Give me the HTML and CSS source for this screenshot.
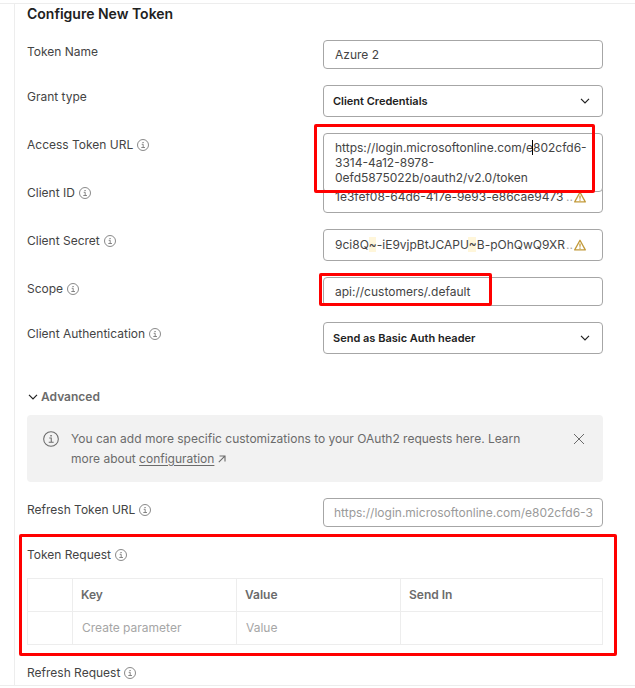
FILE: index.html
```
<!DOCTYPE html>
<html lang="en">
<head>
    <meta charset="UTF-8">
    <meta name="viewport" content="width=device-width, initial-scale=1.0">
    <title>Configure New Token</title>
    <link rel="stylesheet" href="styles.css">
</head>
<body>
    <!-- shared icons -->
    <svg class="sprite" aria-hidden="true">
        <symbol id="icon-info" viewBox="0 0 12 12">
            <circle cx="6" cy="6" r="5.5" fill="none" stroke="currentColor" stroke-width="0.8"/>
            <path d="M4.7 5.3H6.2V8.5M4.3 8.5H8" fill="none" stroke="currentColor" stroke-width="0.8"/>
            <rect x="5.5" y="3" width="1.1" height="1.1" fill="currentColor"/>
        </symbol>
        <symbol id="icon-chevron" viewBox="0 0 10 6">
            <path d="M1 0.8L5 4.8L9 0.8" fill="none" stroke="currentColor" stroke-width="1.2"/>
        </symbol>
        <symbol id="icon-warning" viewBox="0 0 12 12">
            <path d="M6 1.2L11.3 10.9H0.7Z" fill="none" stroke="currentColor" stroke-width="1.3" stroke-linejoin="round"/>
            <path d="M6 4.5V7.8M6 8.6V9.8" stroke="currentColor" stroke-width="1.3"/>
        </symbol>
    </svg>

    <main class="panel">
        <h1>Configure New Token</h1>

        <form class="form">
            <div class="row">
                <label for="tokenName">Token Name</label>
                <input class="field" id="tokenName" type="text" value="Azure 2">
            </div>
            <div class="row">
                <label for="grantType">Grant type</label>
                <div class="select-wrap">
                    <select class="field" id="grantType">
                        <option>Client Credentials</option>
                    </select>
                    <svg class="chevron"><use href="#icon-chevron"/></svg>
                </div>
            </div>
            <div class="row">
                <label for="tokenUrl">Access Token URL <svg class="info"><use href="#icon-info"/></svg></label>
                <div class="expanding">
                    <textarea class="field" id="tokenUrl" spellcheck="false">https://login.microsoftonline.com/e802cfd6-3314-4a12-8978-0efd5875022b/oauth2/v2.0/token</textarea>
                    <span class="caret"></span>
                    <span class="mark mark-url"></span>
                </div>
            </div>
            <div class="row">
                <label for="clientId">Client ID <svg class="info"><use href="#icon-info"/></svg></label>
                <div class="field secret">
                    <input id="clientId" type="text" value="1e3fef08-64d6-417e-9e93-e86cae9473">
                    <span class="dots">..</span>
                    <svg class="warning"><use href="#icon-warning"/></svg>
                </div>
            </div>
            <div class="row">
                <label for="clientSecret">Client Secret <svg class="info"><use href="#icon-info"/></svg></label>
                <div class="field secret">
                    <input class="tilde" id="clientSecret" type="text" value="9ci8Q~-iE9vjpBtJCAPU~B-pOhQwQ9XR">
                    <span class="dots">..</span>
                    <svg class="warning"><use href="#icon-warning"/></svg>
                </div>
            </div>
            <div class="row">
                <label for="scope">Scope <svg class="info"><use href="#icon-info"/></svg></label>
                <div class="marked">
                    <input class="field" id="scope" type="text" value="api://customers/.default">
                    <span class="mark mark-scope"></span>
                </div>
            </div>
            <div class="row">
                <label for="clientAuth">Client Authentication <svg class="info"><use href="#icon-info"/></svg></label>
                <div class="select-wrap">
                    <select class="field" id="clientAuth">
                        <option>Send as Basic Auth header</option>
                    </select>
                    <svg class="chevron"><use href="#icon-chevron"/></svg>
                </div>
            </div>

            <button class="advanced" type="button" aria-expanded="true">
                <svg><use href="#icon-chevron"/></svg>Advanced
            </button>

            <div class="notice">
                <svg class="notice-icon"><use href="#icon-info"/></svg>
                <p>You can add more specific customizations to your OAuth2 requests here. Learn more about <a href="#">configuration</a>
                    <svg class="arrow" viewBox="0 0 8 8"><path d="M0.8 7.2L6.8 1.2M1.5 1H7V6.5" fill="none" stroke="currentColor" stroke-width="1.1"/></svg>
                </p>
                <button class="close" type="button" aria-label="Close">
                    <svg viewBox="0 0 12 12"><path d="M1 1L11 11M11 1L1 11" stroke="currentColor"/></svg>
                </button>
            </div>

            <div class="row">
                <label for="refreshUrl">Refresh Token URL <svg class="info"><use href="#icon-info"/></svg></label>
                <input class="field" id="refreshUrl" type="text" placeholder="https://login.microsoftonline.com/e802cfd6-3">
            </div>

            <section class="request marked">
                <h2>Token Request <svg class="info"><use href="#icon-info"/></svg></h2>
                <table>
                    <thead>
                        <tr>
                            <th class="check"></th>
                            <th class="key">Key</th>
                            <th class="value">Value</th>
                            <th>Send In</th>
                        </tr>
                    </thead>
                    <tbody>
                        <tr>
                            <td></td>
                            <td><input type="text" placeholder="Create parameter" aria-label="Key"></td>
                            <td><input type="text" placeholder="Value" aria-label="Value"></td>
                            <td></td>
                        </tr>
                    </tbody>
                </table>
                <span class="mark mark-request"></span>
            </section>

            <h2>Refresh Request <svg class="info"><use href="#icon-info"/></svg></h2>
        </form>
    </main>
</body>
</html>
```
FILE: styles.css
```
* {
    box-sizing: border-box;
}
body {
    margin: 0;
    padding-top: 3px;
    background: #fff;
    color: #444;
    font-family: Inter, "Liberation Sans", sans-serif;
    font-size: 12px;
    line-height: 24px;
    border-bottom: 1px solid #ededed;
}
body::before {
    content: "";
    display: block;
    border-top: 1px solid #ededed;
}
input, select, textarea, button {
    font: inherit;
    color: inherit;
}
svg {
    flex: none;
}
.sprite {
    position: absolute;
    width: 0;
    height: 0;
}
.panel {
    margin-left: 14px;
    padding: 0 32px 0 12px;
    border-left: 1px solid #ededed;
}
h1 {
    margin: 0 0 16px;
    color: #212121;
    font-size: 14px;
    font-weight: 600;
    line-height: 20px;
}
h2 {
    display: flex;
    align-items: center;
    gap: 4px;
    margin: 0;
    font-size: 12px;
    font-weight: 400;
}
.form {
    display: flex;
    flex-direction: column;
    gap: 16px;
}
.row {
    display: grid;
    grid-template-columns: 1fr 280px;
    align-items: start;
}
.row label {
    display: flex;
    align-items: center;
    gap: 4px;
}
.info {
    width: 12px;
    height: 12px;
    margin-bottom: 1px;
    color: #6b6b6b;
}

/* fields */
.field {
    display: block;
    width: 100%;
    height: 29px;
    padding: 0 9px 0 11px;
    background: #fff;
    border: 1px solid #a6a6a6;
    border-radius: 4px;
    outline: none;
}
.select-wrap {
    position: relative;
}
select.field {
    height: 32px;
    padding: 0 28px 0 9px;
    color: #212121;
    font-size: 11px;
    font-weight: 600;
    appearance: none;
}
.chevron {
    position: absolute;
    top: 13px;
    right: 13px;
    width: 10px;
    height: 6px;
    color: #212121;
    pointer-events: none;
}
/* grows over the row below while it has focus */
.expanding {
    position: relative;
    z-index: 1;
    height: 32px;
}
textarea.field {
    height: 59px;
    padding: 6px 8px 6px 11px;
    line-height: 15px;
    overflow: hidden;
    resize: none;
}
.caret {
    position: absolute;
    top: 7px;
    left: 209px;
    width: 1px;
    height: 15px;
    background: #000;
}
.secret {
    display: flex;
    align-items: center;
    height: 32px;
    padding-right: 16px;
}
.secret input {
    flex: 1;
    min-width: 0;
    height: 18px;
    padding: 0;
    background: none;
    border: 0;
    outline: none;
}
.secret .tilde {
    background: linear-gradient(#fff6da, #fff6da) 34px 1px / 7px 15px no-repeat,
        linear-gradient(#fff6da, #fff6da) 133px 1px / 8px 15px no-repeat;
}
.dots {
    padding: 0 1px;
    color: #a6a6a6;
}
.warning {
    width: 12px;
    height: 12px;
    color: #c29a3a;
}
::placeholder {
    color: #a6a6a6;
    opacity: 1;
}
.field::placeholder {
    color: #9a9a9a;
}
#refreshUrl {
    padding: 0 9px 0 10px;
}

/* advanced */
.advanced {
    display: flex;
    align-items: center;
    gap: 3px;
    align-self: flex-start;
    margin: 17px 0 -8px;
    padding: 0 0 0 1px;
    color: #6b6b6b;
    background: none;
    border: 0;
    font-weight: 600;
    line-height: 20px;
}
.advanced svg {
    width: 10px;
    height: 6px;
    color: #212121;
}
.notice {
    display: flex;
    align-items: flex-start;
    padding: 14px 16px 13px;
    background: #f2f2f2;
    border-radius: 4px;
    color: #6b6b6b;
    line-height: 20px;
}
.notice-icon {
    width: 16px;
    height: 16px;
    margin: 2px 12px 0 0;
}
.notice p {
    flex: 1;
    margin: 0;
    padding-right: 32px;
}
.notice a {
    color: inherit;
    text-underline-offset: 2px;
}
.arrow {
    width: 8px;
    height: 8px;
}
.close {
    display: flex;
    margin-top: 4px;
    padding: 0 2px;
    background: none;
    border: 0;
}
.close svg {
    width: 12px;
    height: 12px;
}

/* parameters table */
table {
    width: 100%;
    margin-top: 11px;
    border-collapse: collapse;
    table-layout: fixed;
}
th, td {
    height: 33px;
    padding: 0 8px;
    border: 1px solid #ededed;
    line-height: 16px;
    text-align: left;
}
th {
    color: #6b6b6b;
    font-weight: 600;
}
.check {
    width: 45px;
}
.key, .value {
    width: 164px;
}
td input {
    display: block;
    width: 100%;
    padding: 0 1px;
    background: none;
    border: 0;
    outline: none;
}

/* red highlight frames */
.marked {
    position: relative;
}
.mark {
    position: absolute;
    border: 3px solid #f00;
    border-radius: 2px;
    pointer-events: none;
}
.mark-url {
    inset: -9px 8px -28px -9px;
}
.mark-scope {
    inset: -4px 111px 0 -4px;
}
.mark-request {
    inset: -9px -14px -11px -8px;
}
```
